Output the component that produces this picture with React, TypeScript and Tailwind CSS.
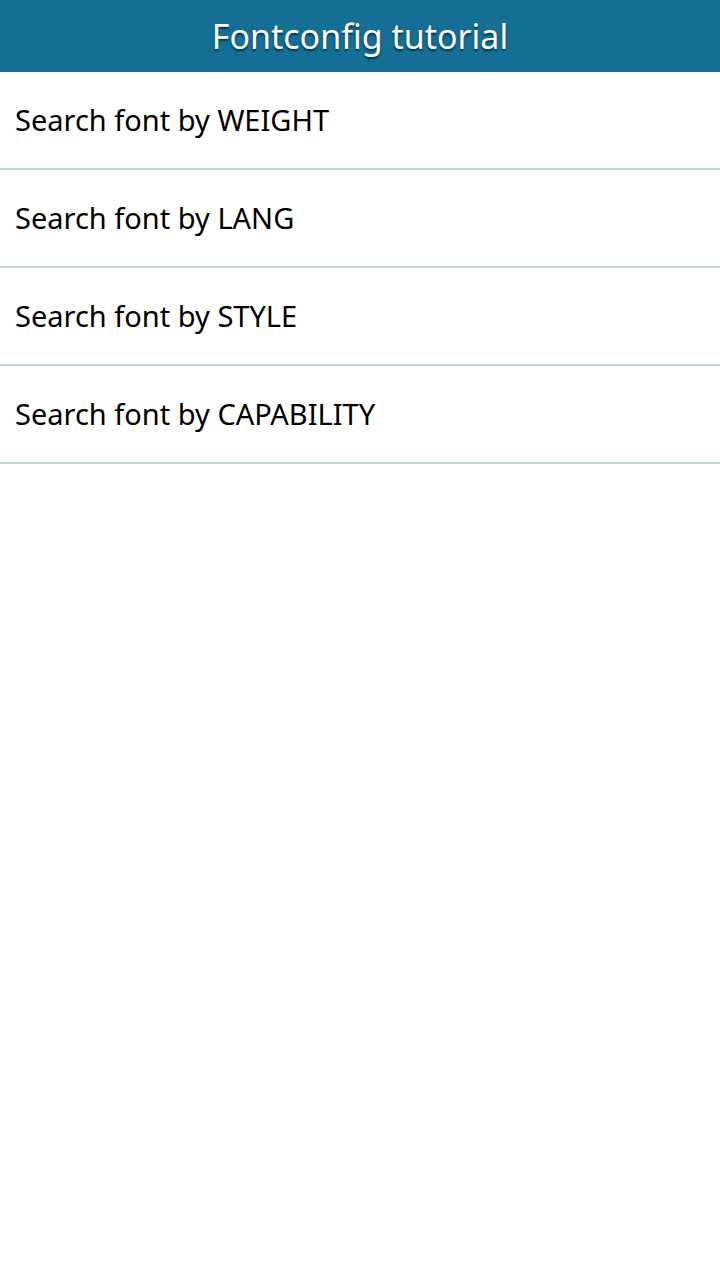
import React from 'react';

const items = ['WEIGHT', 'LANG', 'STYLE', 'CAPABILITY'];

const App: React.FC = () => {
  return (
    <div className="min-h-[1280px] w-[720px] bg-white" style={{ fontFamily: '"Noto Sans", "Open Sans", sans-serif' }}>
      <header className="flex h-[72px] items-center justify-center bg-[#156e96]">
        <h1 className="text-[34px] text-white [text-shadow:0_2px_2px_rgba(0,0,0,0.55)]">Fontconfig tutorial</h1>
      </header>
      <ul>
        {items.map(item => (
          <li key={item} className="flex h-[98px] items-center border-b-2 border-[#c4d6de] pl-[15px] text-[29px] text-black">
            Search font by {item}
          </li>
        ))}
      </ul>
    </div>
  );
};

export default App;
